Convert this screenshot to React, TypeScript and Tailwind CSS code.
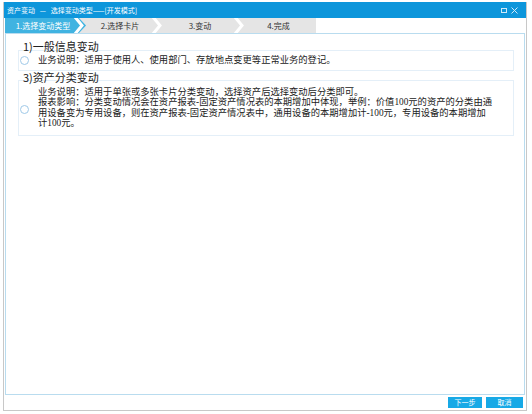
import React from 'react';

const font = { fontFamily: '"Liberation Serif", "Noto Sans CJK SC", serif' };
const sans = { fontFamily: '"Noto Sans CJK SC", sans-serif' };

function Chevron({ className }: { className?: string }) {
  return (
    <svg className={className} width="10" height="15" viewBox="0 0 10 15">
      <polyline points="1,-1 8,7.5 1,16" fill="none" stroke="#ffffff" strokeWidth="3" />
    </svg>
  );
}

export default function App() {
  const steps = [
    { label: '1.选择变动类型', w: 'w-[76px]' },
    { label: '2.选择卡片', w: 'w-[78px]' },
    { label: '3.变动', w: 'w-[82px]' },
    { label: '4.完成', w: 'w-[75px]' },
  ];

  return (
    <div className="w-[532px] h-[414px] bg-white overflow-hidden" style={font}>
      <div className="ml-[3px] mt-[2px] w-[524px] h-[409px] flex flex-col border-l border-r border-b border-[#c8c8c8] bg-white">
        {/* Title bar */}
        <div className="h-[16px] bg-[#0d96db] flex items-center justify-between pl-[3px] pr-[8px]">
          <span className="text-[7px] text-white leading-none whitespace-pre" style={sans}>
            资产变动   —   选择变动类型——[开发模式]
          </span>
          <div className="flex items-center gap-[4px]">
            <div className="w-[6px] h-[5px] border border-[#cfe9f8]" />
            <svg width="7" height="7" viewBox="0 0 7 7">
              <path d="M0.5 0.5 L6.5 6.5 M6.5 0.5 L0.5 6.5" stroke="#cfe9f8" strokeWidth="1" />
            </svg>
          </div>
        </div>

        {/* Steps */}
        <div className="h-[15px] flex pl-[1px]">
          <div className="flex bg-[#e5e5e5] h-full">
            {steps.map((s, i) => (
              <div key={s.label} className={`${s.w} relative h-full flex items-center justify-center`}>
                {i === 0 && (
                  <div
                    className="absolute inset-0 bg-[#40b3e1] -right-[5px]"
                    style={{ clipPath: 'polygon(0 0, calc(100% - 7px) 0, 100% 50%, calc(100% - 7px) 100%, 0 100%)' }}
                  />
                )}
                <span className={`relative text-[8px] leading-none ${i === 0 ? 'text-white' : 'text-[#333333]'}`} style={sans}>
                  {s.label}
                </span>
                {i < 3 && <Chevron className="absolute -right-[3px] top-0" />}
              </div>
            ))}
          </div>
        </div>

        {/* Content */}
        <div className="flex-1 mx-[1px] border border-[#b9dcef] pt-[6px] pl-[12px] pr-[10px] text-[#222222]">
          <div className="text-[11px] leading-[13px] pl-[5px]" style={sans}>
            1)一般信息变动
          </div>
          <div className="mt-[-3px] h-[21px] border border-[#e4eff8] flex items-center pl-[1px]">
            <div className="w-[9px] h-[9px] rounded-full border border-[#9fc9e8] bg-white" />
            <span className="ml-[9px] text-[9.3px] leading-none">业务说明：适用于使用人、使用部门、存放地点变更等正常业务的登记。</span>
          </div>

          <div className="mt-[0px] text-[11px] leading-[13px] pl-[5px]" style={sans}>
            3)资产分类变动
          </div>
          <div className="mt-[-4px] h-[56px] border border-[#e4eff8] flex items-center pl-[1px]">
            <div className="w-[9px] h-[9px] rounded-full border border-[#9fc9e8] bg-white shrink-0 mt-[3px]" />
            <div className="ml-[9px] text-[9.3px] leading-[10.5px] mt-[-1px]">
              <div>业务说明：适用于单张或多张卡片分类变动，选择资产后选择变动后分类即可。</div>
              <div>报表影响：分类变动情况会在资产报表-固定资产情况表的本期增加中体现，举例：价值100元的资产的分类由通</div>
              <div>用设备变为专用设备，则在资产报表-固定资产情况表中，通用设备的本期增加计-100元，专用设备的本期增加</div>
              <div>计100元。</div>
            </div>
          </div>
        </div>

        {/* Footer */}
        <div className="h-[15px] flex items-center justify-end gap-[4px] pr-[3px]">
          <button className="w-[34px] h-[11px] bg-[#17a9e6] text-white text-[7px] leading-none" style={sans}>
            下一步
          </button>
          <button className="w-[37px] h-[11px] bg-[#17a9e6] text-white text-[7px] leading-none" style={sans}>
            取消
          </button>
        </div>
      </div>
    </div>
  );
}
